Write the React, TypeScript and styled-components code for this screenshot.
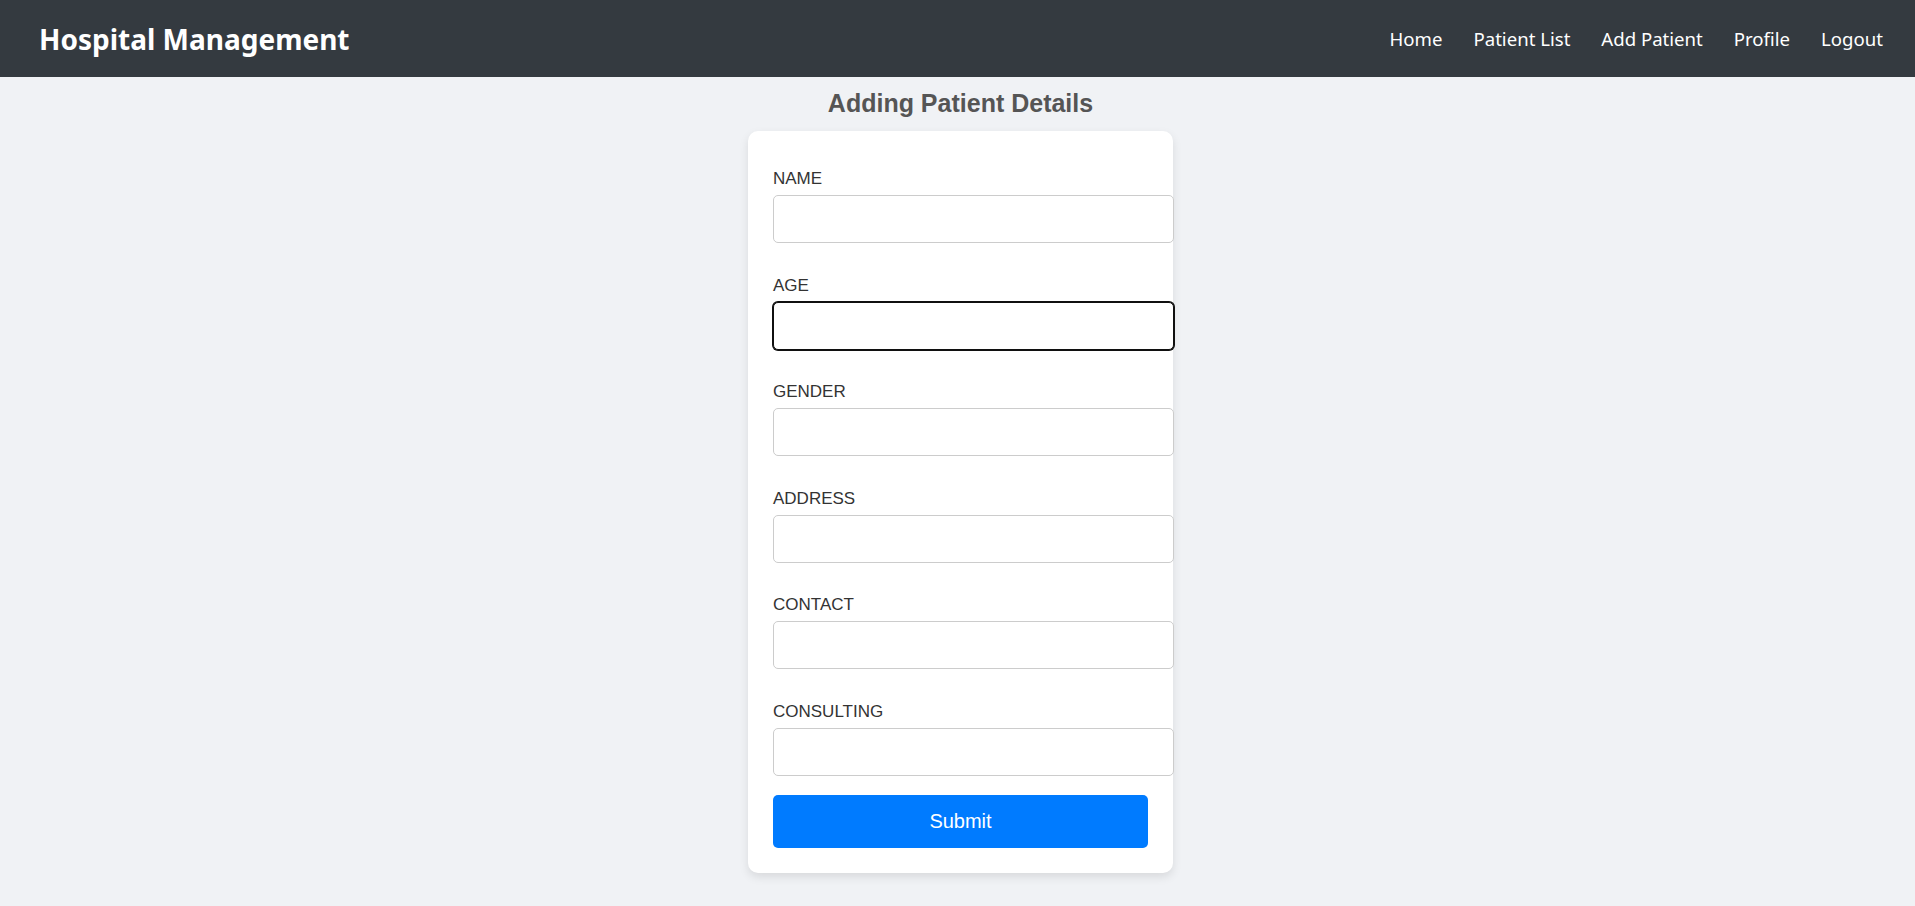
import React from "react";
import styled, { createGlobalStyle } from "styled-components";

const GlobalStyle = createGlobalStyle`
  html, body {
    margin: 0;
    padding: 0;
    background: #f0f2f5;
    font-family: "Liberation Sans", Arial, sans-serif;
  }
  * { font-family: inherit; }
`;

const NavBar = styled.nav`
  height: 77px;
  background: #343a40;
  display: flex;
  align-items: center;
  justify-content: space-between;
  padding: 0 32px 0 39px;
  font-family: "Noto Sans", "Open Sans", sans-serif;
`;

const Brand = styled.div`
  color: #ffffff;
  font-size: 28px;
  font-weight: 700;
`;

const NavLinks = styled.div`
  display: flex;
  align-items: center;
  gap: 31px;
`;

const NavLink = styled.a`
  color: #ffffff;
  font-size: 18.6px;
  text-decoration: none;
  cursor: pointer;
`;

const Main = styled.main`
  display: flex;
  flex-direction: column;
  align-items: center;
  padding: 12px 0 30px 6px;
`;

const Title = styled.h2`
  margin: 0 0 14px;
  font-size: 25px;
  font-weight: 700;
  color: #555555;
  line-height: 28px;
`;

const Card = styled.form`
  width: 375px;
  background: #ffffff;
  border-radius: 10px;
  padding: 25px;
  box-shadow: 0 4px 10px rgba(0, 0, 0, 0.1);
`;

const Field = styled.div`
  display: flex;
  flex-direction: column;
  margin-bottom: 19.5px;
`;

const Label = styled.label`
  display: block;
  margin: 13px 0 7px;
  font-size: 17px;
  line-height: 19px;
  color: #333333;
`;

const Input = styled.input<{ $focused?: boolean }>`
  display: block;
  width: 100%;
  box-sizing: content-box;
  height: 22px;
  padding: 12px;
  font-size: 16px;
  border: 1px solid #cccccc;
  border-radius: 5px;
  outline: none;
  background: #ffffff;
  ${(p) =>
    p.$focused &&
    `
    border-color: #101010;
    box-shadow: 0 0 0 1px #101010;
  `}
`;

const SubmitButton = styled.button`
  display: block;
  width: 100%;
  height: 53px;
  border: none;
  border-radius: 5px;
  background: #007bff;
  color: #ffffff;
  font-size: 20px;
  cursor: pointer;
`;

const fields = ["NAME", "AGE", "GENDER", "ADDRESS", "CONTACT", "CONSULTING"];

export default function App() {
  return (
    <>
      <GlobalStyle />
      <NavBar>
        <Brand>Hospital Management</Brand>
        <NavLinks>
          <NavLink>Home</NavLink>
          <NavLink>Patient List</NavLink>
          <NavLink>Add Patient</NavLink>
          <NavLink>Profile</NavLink>
          <NavLink>Logout</NavLink>
        </NavLinks>
      </NavBar>
      <Main>
        <Title>Adding Patient Details</Title>
        <Card onSubmit={(e) => e.preventDefault()}>
          {fields.map((f) => (
            <Field key={f}>
              <Label>{f}</Label>
              <Input type="text" $focused={f === "AGE"} />
            </Field>
          ))}
          <SubmitButton type="submit">Submit</SubmitButton>
        </Card>
      </Main>
    </>
  );
}
